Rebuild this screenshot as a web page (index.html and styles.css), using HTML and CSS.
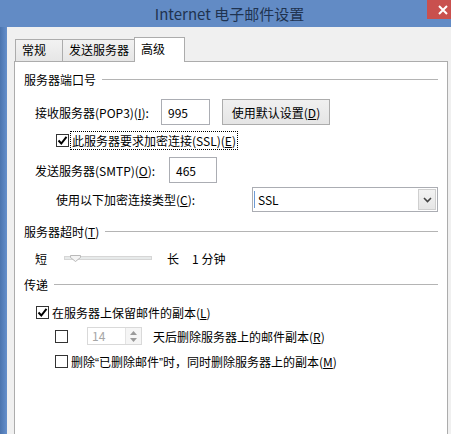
FILE: index.html
```html
<!DOCTYPE html>
<html lang="zh-CN">
<head>
<meta charset="UTF-8">
<title>Internet 电子邮件设置</title>
<link rel="stylesheet" href="styles.css">
</head>
<body>
    <div class="window">
        <div class="titlebar">
            <span class="title">Internet 电子邮件设置</span>
            <span class="close">
                <svg width="10" height="10" viewBox="0 0 10 10"><path d="M1 1L9 9M9 1L1 9" stroke="#fff" stroke-width="2"/></svg>
            </span>
        </div>
        <div class="frame">
            <div class="edge"></div>
            <div class="client">
                <div class="tabs">
                    <div class="tab tab-general">常规</div>
                    <div class="tab tab-send">发送服务器</div>
                    <div class="tab tab-adv active">高级</div>
                </div>
                <div class="panel">
                    <!-- ports -->
                    <div class="group-title">服务器端口号</div>
                    <div class="row row-pop">
                        <span class="lbl lbl-pop">接收服务器(POP3)(<u>I</u>):</span>
                        <span class="field field-pop">995</span>
                        <span class="btn">使用默认设置(<u>D</u>)</span>
                    </div>
                    <div class="row row-ssl">
                        <span class="check checked">
                            <svg width="11" height="11" viewBox="0 0 11 11"><path d="M1.5 5.5L4.3 8.5L9.5 1.8" fill="none" stroke="#000" stroke-width="2"/></svg>
                        </span>
                        <span class="focus">此服务器要求加密连接(SSL)(<u>E</u>)</span>
                    </div>
                    <div class="row row-smtp">
                        <span class="lbl lbl-smtp">发送服务器(SMTP)(<u>O</u>):</span>
                        <span class="field field-smtp">465</span>
                    </div>
                    <div class="row row-enc">
                        <span class="lbl lbl-enc">使用以下加密连接类型(<u>C</u>):</span>
                        <span class="select">
                            <span class="select-val">SSL</span>
                            <span class="select-btn">
                                <svg width="9" height="6" viewBox="0 0 9 6"><path d="M1 1L4.5 4.5L8 1" fill="none" stroke="#444" stroke-width="1.6"/></svg>
                            </span>
                        </span>
                    </div>

                    <!-- timeout -->
                    <div class="group-title group-timeout">服务器超时(<u>T</u>)</div>
                    <div class="row row-slider">
                        <span class="short">短</span>
                        <span class="slider">
                            <span class="track"></span>
                            <svg class="thumb" width="11" height="7" viewBox="0 0 11 7"><path d="M0.5 0.5H10.5V2.5L5.5 6.5L0.5 2.5Z" fill="#f4f4f4" stroke="#b9b9b9"/></svg>
                        </span>
                        <span class="long">长</span>
                        <span class="minutes">1 分钟</span>
                    </div>

                    <!-- delivery -->
                    <div class="group-title group-deliver">传递</div>
                    <div class="row row-keep">
                        <span class="check checked">
                            <svg width="11" height="11" viewBox="0 0 11 11"><path d="M1.5 5.5L4.3 8.5L9.5 1.8" fill="none" stroke="#000" stroke-width="2"/></svg>
                        </span>
                        <span class="check-lbl">在服务器上保留邮件的副本(<u>L</u>)</span>
                    </div>
                    <div class="row row-days">
                        <span class="check"></span>
                        <span class="spin">
                            <span class="spin-val">14</span>
                            <span class="spin-btns">
                                <svg width="7" height="4" viewBox="0 0 7 4"><path d="M0 4L3.5 0L7 4Z" fill="#9a9a9a"/></svg>
                                <svg width="7" height="4" viewBox="0 0 7 4"><path d="M0 0L3.5 4L7 0Z" fill="#9a9a9a"/></svg>
                            </span>
                        </span>
                        <span class="days-lbl">天后删除服务器上的邮件副本(<u>R</u>)</span>
                    </div>
                    <div class="row row-deleted">
                        <span class="check"></span>
                        <span class="check-lbl">删除<span class="quote">“</span>已删除邮件<span class="quote">”</span>时，同时删除服务器上的副本(<u>M</u>)</span>
                    </div>
                </div>
            </div>
        </div>
    </div>
</body>
</html>
```

FILE: styles.css
```css
/* Outlook account dialog, advanced tab */
body {
    margin: 0;
    font-family: "Noto Sans CJK SC", "Microsoft YaHei", sans-serif;
    font-size: 12px;
    color: #000;
}

u {
    text-decoration: underline;
    text-underline-offset: 1px;
}

.window {
    width: 451px;
    height: 434px;
    display: flex;
    flex-direction: column;
    overflow: hidden;
    background-color: #628bc5;
}

.titlebar {
    height: 27px;
    flex: none;
    display: flex;
    justify-content: center;
    align-items: center;
    position: relative;
}

.title {
    font-size: 15px;
    color: #1f3350;
    margin-left: 8px;
    margin-top: -1px;
}

.close {
    position: absolute;
    top: 0;
    right: 0;
    width: 24px;
    height: 19px;
    background-color: #c9504e;
    display: flex;
    align-items: center;
    justify-content: center;
    padding-left: 7px;
    box-sizing: border-box;
}

.frame {
    flex: 1;
    display: flex;
}

.edge {
    width: 8px;
    background: linear-gradient(to right, #4b74ae, #5a84c0 60%, #6690cb);
}

.client {
    flex: 1;
    background-color: #f0f0f0;
    padding: 10px 3px 0 7px;
    display: flex;
    flex-direction: column;
}

/* tab strip */
.tabs {
    height: 24px;
    display: flex;
    align-items: flex-end;
    padding-left: 1px;
}

.tab {
    height: 22px;
    box-sizing: border-box;
    border: 1px solid #acacac;
    border-bottom: none;
    background: linear-gradient(#f2f2f2, #e6e6e6);
    padding-left: 6px;
    line-height: 20px;
}

.tab-general {
    width: 48px;
}

.tab-send {
    width: 73px;
    margin-left: -1px;
}

.tab-adv {
    width: 51px;
    margin-left: -1px;
}

.tab.active {
    height: 25px;
    margin-bottom: -1px;
    background: #fff;
    position: relative;
    z-index: 1;
    line-height: 22px;
}

.panel {
    flex: 1;
    background-color: #fff;
    border: 1px solid #acacac;
    border-bottom: none;
    padding: 10px 9px 0 9px;
}

/* group headings with a rule after the text */
.group-title {
    height: 16px;
    line-height: 16px;
    display: flex;
    align-items: center;
}

.group-title::after {
    content: "";
    flex: 1;
    height: 1px;
    background-color: #b4b4b4;
    margin-left: 6px;
    margin-top: -2px;
}

.group-timeout {
    margin-top: 12px;
}

.group-deliver {
    margin-top: 11px;
}

.row {
    display: flex;
    align-items: center;
}

.lbl {
    flex: none;
}

.field {
    box-sizing: border-box;
    border: 1px solid #abadb3;
    display: flex;
    align-items: center;
    padding-left: 6px;
    height: 26px;
}

.row-pop {
    margin-top: 11px;
    height: 26px;
    padding-left: 11px;
}

.lbl-pop {
    width: 126px;
}

.field-pop {
    width: 49px;
}

.btn {
    margin-left: 12px;
    width: 108px;
    height: 26px;
    box-sizing: border-box;
    border: 1px solid #acacac;
    background: linear-gradient(#f0f0f0, #e5e5e5);
    display: flex;
    align-items: center;
    justify-content: center;
}

.check {
    width: 13px;
    height: 13px;
    box-sizing: border-box;
    border: 1px solid #333;
    background-color: #fff;
    display: flex;
    align-items: center;
    justify-content: center;
    flex: none;
}

.row-ssl {
    margin-top: 6px;
    height: 19px;
    padding-left: 32px;
}

.focus {
    margin-left: 1px;
    border: 1px dotted #000;
    padding: 0 1px;
    line-height: 17px;
}

.row-smtp {
    margin-top: 7px;
    height: 26px;
    padding-left: 11px;
}

.lbl-smtp {
    width: 134px;
}

.field-smtp {
    width: 48px;
}

.row-enc {
    margin-top: 4px;
    height: 25px;
    padding-left: 32px;
}

.lbl-enc {
    width: 196px;
}

.select {
    width: 186px;
    height: 25px;
    box-sizing: border-box;
    border: 1px solid #abadb3;
    display: flex;
    align-items: center;
}

.select-val {
    flex: 1;
    padding-left: 3px;
    border-left: 1px solid #6c9bd6;
    margin-left: 1px;
    line-height: 17px;
}

.select-btn {
    width: 18px;
    height: 21px;
    box-sizing: border-box;
    margin-right: 1px;
    border: 1px solid #cfcfcf;
    background: linear-gradient(#f3f3f3, #e6e6e6);
    display: flex;
    align-items: center;
    justify-content: center;
}

/* timeout slider */
.row-slider {
    margin-top: 10px;
    height: 16px;
    padding-left: 11px;
}

.slider {
    margin-left: 17px;
    width: 88px;
    height: 12px;
    position: relative;
    display: flex;
    align-items: center;
}

.track {
    width: 100%;
    height: 4px;
    box-sizing: border-box;
    border: 1px solid #d6d6d6;
    background-color: #e7eaea;
}

.thumb {
    position: absolute;
    left: 6px;
    top: 3px;
}

.long {
    margin-left: 15px;
}

.minutes {
    margin-left: 13px;
}

.row-keep {
    margin-top: 11px;
    height: 16px;
    padding-left: 12px;
}

.check-lbl {
    margin-left: 3px;
}

/* narrow curly quotes, as the system font draws them */
.quote {
    font-family: "Liberation Sans", sans-serif;
}

.row-days {
    margin-top: 7px;
    height: 18px;
    padding-left: 31px;
}

.spin {
    margin-left: 19px;
    width: 55px;
    height: 18px;
    box-sizing: border-box;
    border: 1px solid #d9d9d9;
    display: flex;
}

.spin-val {
    flex: 1;
    color: #a6a6a6;
    padding-left: 4px;
    line-height: 16px;
}

.spin-btns {
    width: 15px;
    border-left: 1px solid #e3e3e3;
    background-color: #f5f5f5;
    display: flex;
    flex-direction: column;
    align-items: center;
    justify-content: center;
    gap: 3px;
}

.days-lbl {
    margin-left: 11px;
}

.row-deleted {
    margin-top: 8px;
    height: 16px;
    padding-left: 31px;
}
```
